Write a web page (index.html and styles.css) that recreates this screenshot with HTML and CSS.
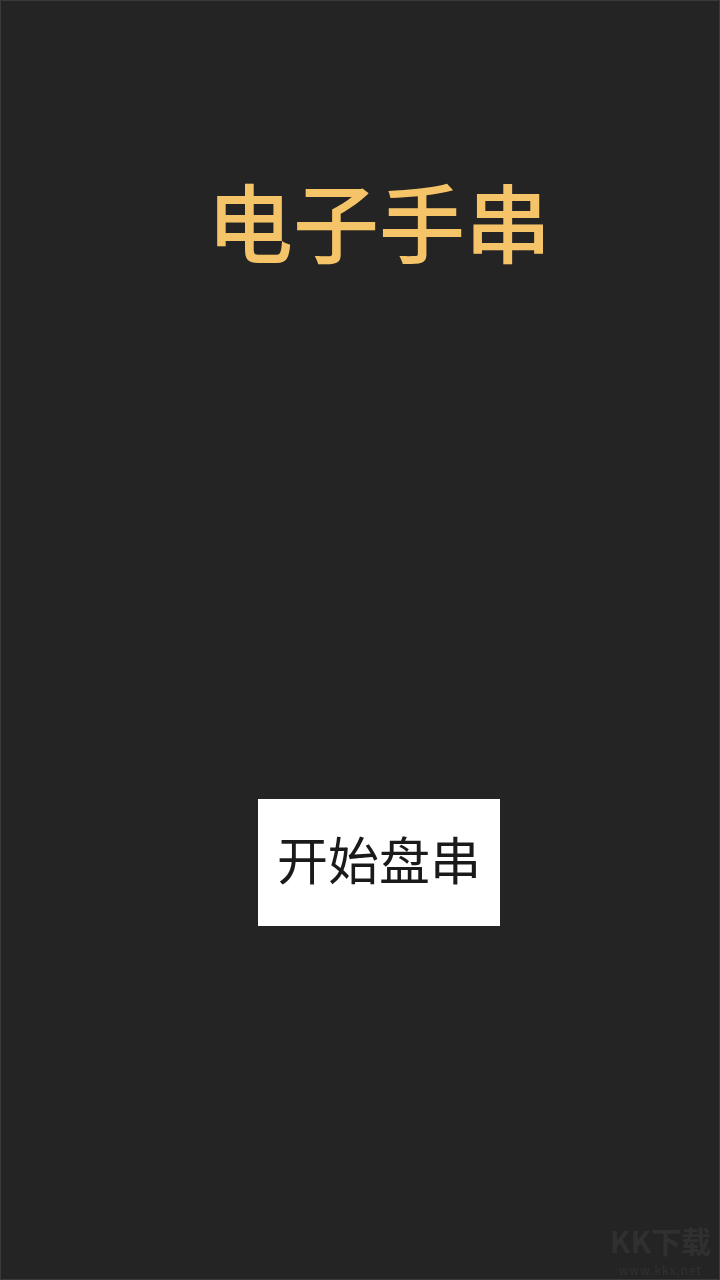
FILE: index.html
```html
<!DOCTYPE html>
<html lang="zh-CN">
<head>
<meta charset="utf-8">
<title>电子手串</title>
<link rel="stylesheet" href="styles.css">
</head>
<body>
<div class="page">
  <h1 class="title">电子手串</h1>
  <button class="start">开始盘串</button>
  <div class="watermark">
    <div class="wm-logo">KK下载</div>
    <div class="wm-url">www.kkx.net</div>
  </div>
</div>
</body>
</html>
```
FILE: styles.css
```css
html, body {
  margin: 0;
  padding: 0;
  background: #242424;
}
.page {
  position: relative;
  box-sizing: border-box;
  width: 720px;
  height: 1280px;
  border: 1px solid #3a3a3a;
  display: flex;
  flex-direction: column;
  align-items: center;
  padding-top: 171px;
  padding-left: 38px;
  font-family: "Noto Sans CJK SC", "Noto Sans", sans-serif;
}
.title {
  margin: 0;
  font-size: 86px;
  line-height: 96px;
  font-weight: 500;
  color: #f6c468;
  letter-spacing: 0;
}
.start {
  margin-top: 531px;
  width: 242px;
  height: 127px;
  background: #ffffff;
  border: none;
  border-radius: 0;
  padding: 0 0 10px 0;
  font-family: "Noto Sans CJK SC", "Noto Sans", sans-serif;
  font-size: 51px;
  font-weight: 400;
  color: #1a1a1a;
}
.watermark {
  position: absolute;
  right: 8px;
  bottom: 2px;
  text-align: center;
  color: #303030;
  font-family: "Noto Sans CJK SC", sans-serif;
}
.wm-logo {
  font-size: 30px;
  line-height: 34px;
  font-weight: 700;
}
.wm-url {
  margin-top: 6px;
  font-size: 12px;
  line-height: 14px;
  letter-spacing: 1px;
}
```
